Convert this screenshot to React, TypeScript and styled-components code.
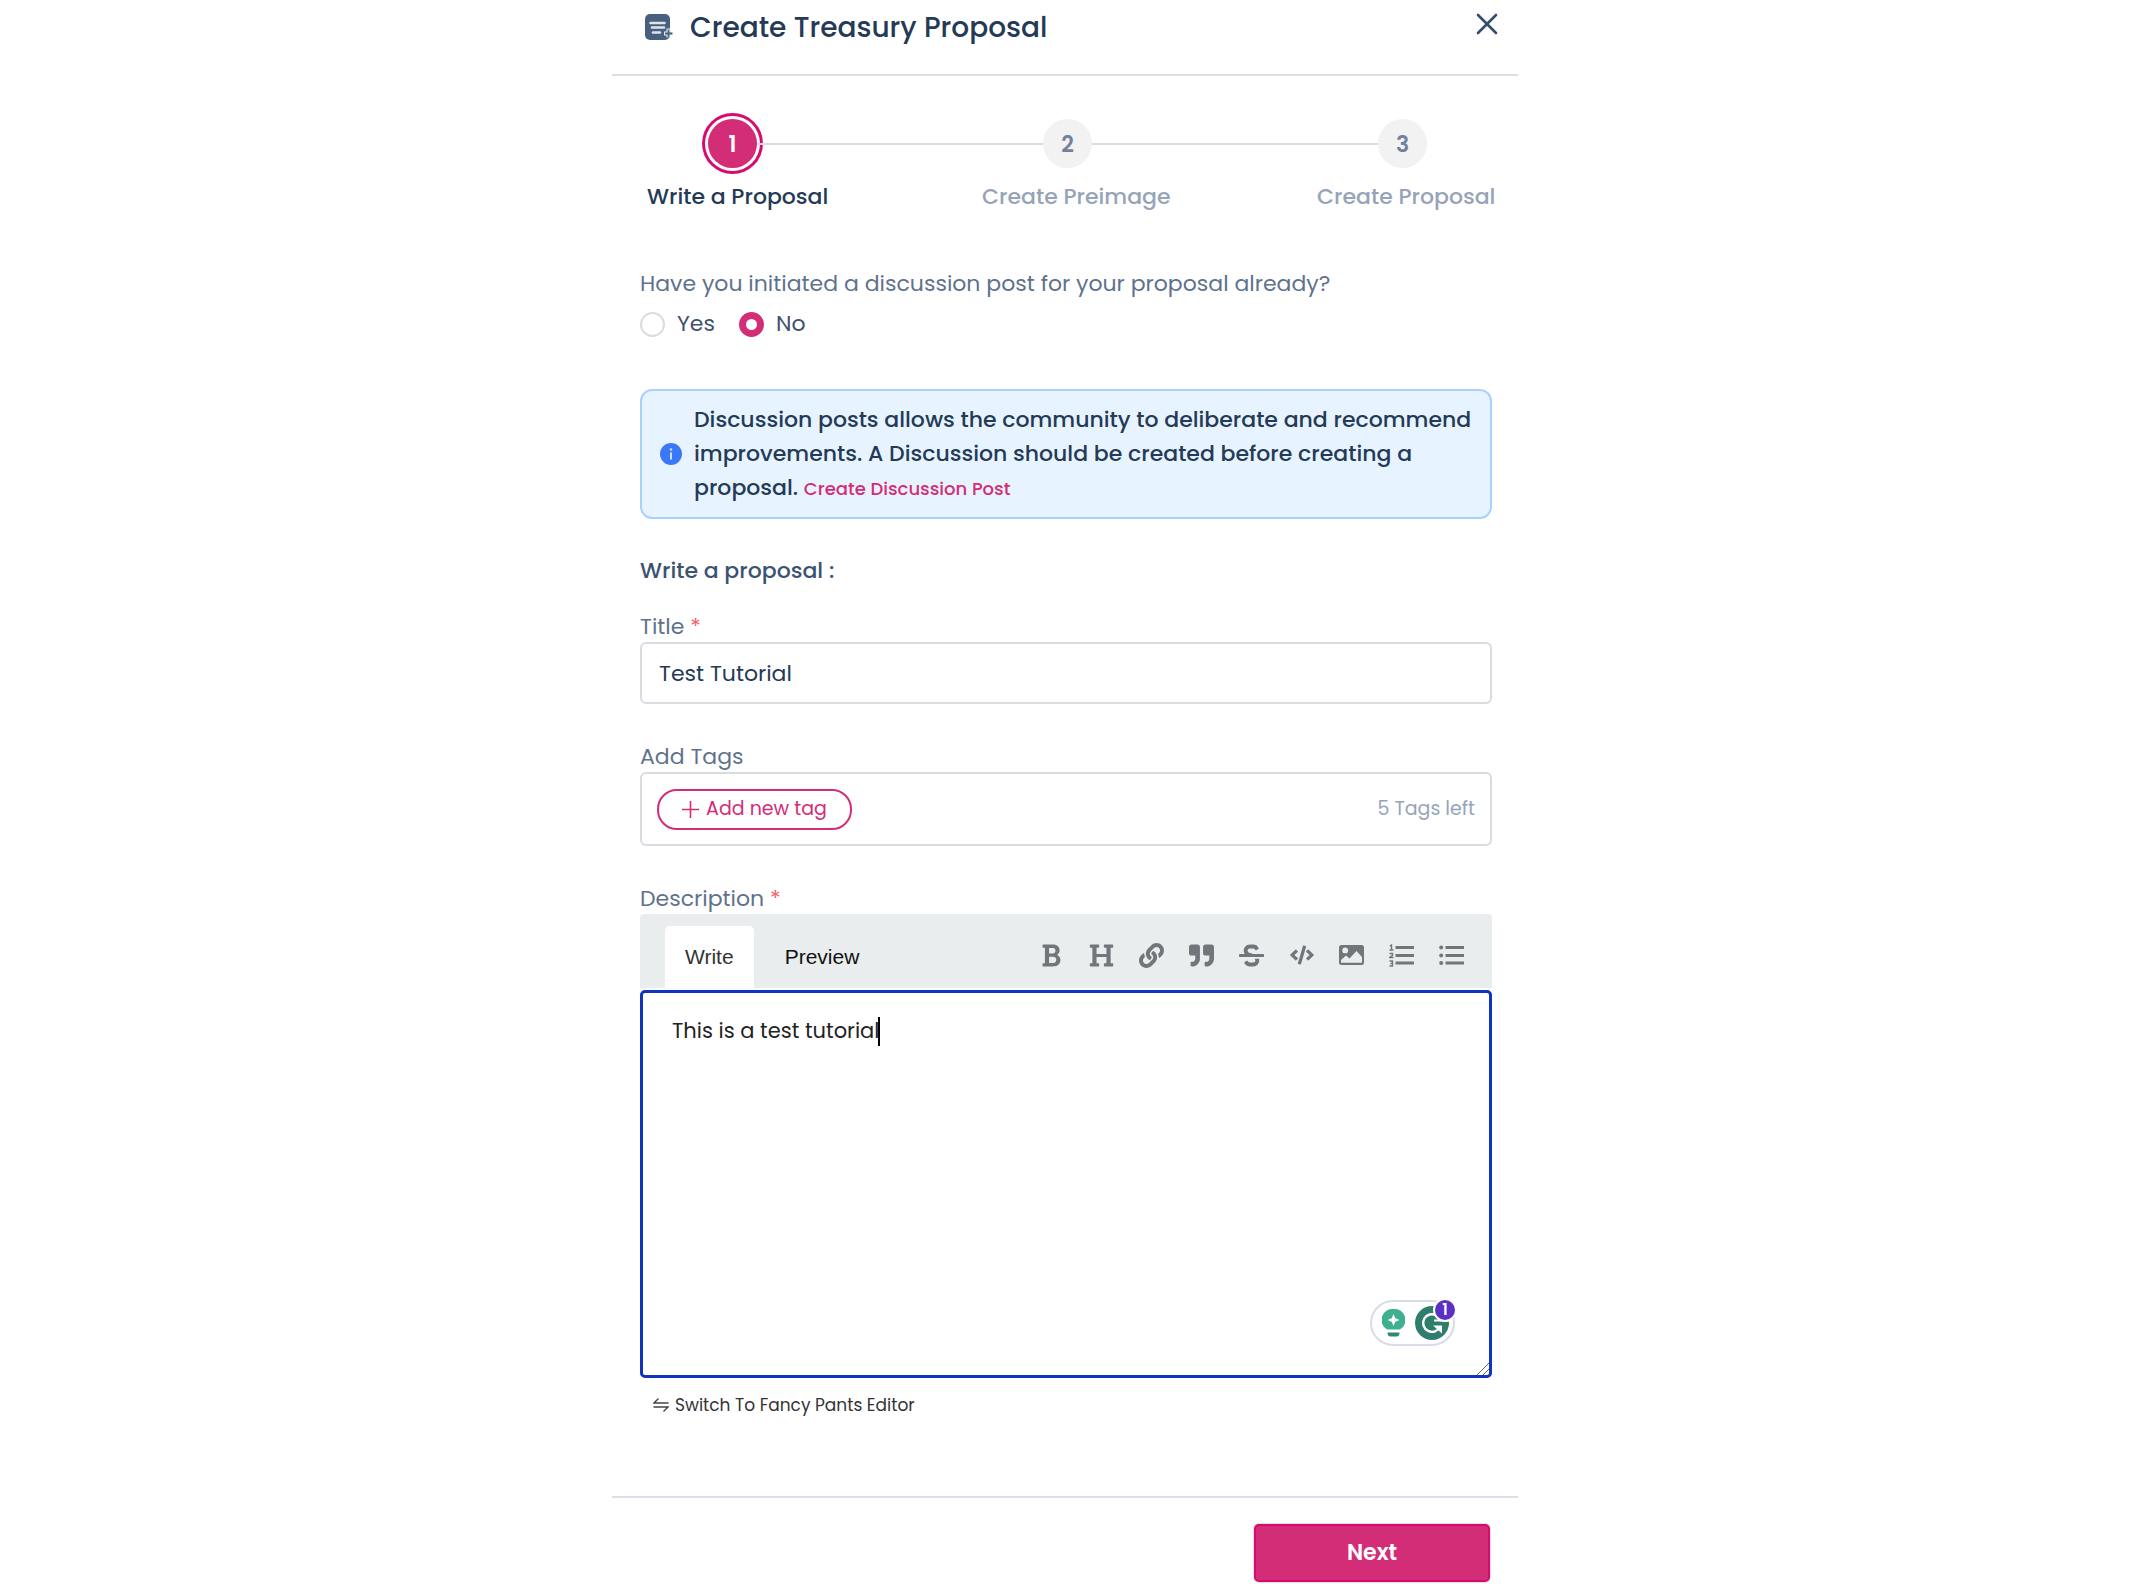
import React, { useState } from 'react';
import styled, { createGlobalStyle, css } from 'styled-components';
import { FaCode, FaLink, FaQuoteRight, FaStrikethrough } from 'react-icons/fa';

const color = {
  ink: '#243a57',
  heading: '#3b5273',
  label: '#5f728d',
  muted: '#96a4b8',
  line: '#dcdfe8',
  field: '#d9dbe1',
  pink: '#d42d78',
};

const GlobalStyle = createGlobalStyle`
  *, *::before, *::after { box-sizing: border-box; }
  body {
    margin: 0;
    background: #fff;
    color: ${color.ink};
    font-family: Poppins, Inter, 'Noto Sans', sans-serif;
    font-size: 22px;
    line-height: 34px;
  }
  button, input, textarea { font: inherit; color: inherit; }
  button { cursor: pointer; }
`;

const Dialog = styled.main`
  width: 100%;
  max-width: 906px;
  margin: 0 auto;
`;

const Header = styled.header`
  display: flex;
  align-items: center;
  gap: 17px;
  height: 76px;
  padding: 0 20px 20px 33px;
  border-bottom: 2px solid ${color.line};
`;

const Heading = styled.h1`
  flex: 1;
  margin: 0;
  padding-top: 2px;
  font-size: 28px;
  font-weight: 500;
  color: ${color.ink};
`;

const CloseButton = styled.button`
  display: flex;
  padding: 0;
  margin-bottom: 6px;
  border: 0;
  background: none;
`;

const Body = styled.form`
  display: flex;
  flex-direction: column;
  padding: 37px 26px 0 28px;
`;

const Steps = styled.ol`
  display: flex;
  list-style: none;
  margin: 0;
  padding: 0 0 0 7px;
`;

const Step = styled.li<{ $last?: boolean }>`
  display: flex;
  flex-direction: column;
  gap: 11px;
  min-width: 0;
  flex: ${(p) => (p.$last ? '0 0 175px' : '1')};
  white-space: nowrap;
`;

const Track = styled.div`
  display: flex;
  align-items: center;
  height: 61px;
`;

const Rail = styled.span<{ $lead?: boolean; $hidden?: boolean }>`
  flex: ${(p) => (p.$lead ? '0 0 61px' : '1')};
  height: 2px;
  background: ${(p) => (p.$hidden ? 'transparent' : '#d7dee3')};
`;

const StepNumber = styled.span<{ $active?: boolean }>`
  display: grid;
  place-items: center;
  width: 49px;
  height: 49px;
  padding-top: 3px;
  border-radius: 50%;
  font-weight: 600;
  background: #f2f2f2;
  color: #73829c;
  ${(p) =>
    p.$active &&
    css`
      background: ${color.pink};
      color: #fff;
      box-shadow: 0 0 0 3px #fff, 0 0 0 6px #d60b70;
    `}
`;

const StepLabel = styled.span<{ $active?: boolean }>`
  line-height: 24px;
  font-weight: 500;
  color: ${(p) => (p.$active ? color.ink : color.muted)};
`;

const Question = styled.fieldset`
  margin: 58px 0 0;
  padding: 0;
  border: 0;
`;

const Legend = styled.legend`
  padding: 0;
  color: ${color.label};
`;

const Choices = styled.div`
  display: flex;
  gap: 24px;
  margin-top: 6px;
`;

const Choice = styled.label`
  display: flex;
  align-items: center;
  gap: 12px;
  color: #42526c;
`;

const Radio = styled.input`
  appearance: none;
  width: 25px;
  height: 25px;
  margin: 0;
  border: 2px solid #dcdcdc;
  border-radius: 50%;
  background: #fff;
  &:checked {
    border: 7px solid ${color.pink};
  }
`;

const Notice = styled.div`
  display: flex;
  align-items: center;
  gap: 12px;
  margin-top: 48px;
  padding: 12px 8px 12px 18px;
  border: 2px solid #a9d1fb;
  border-radius: 12px;
  background: #e7f4ff;
  font-weight: 500;

  svg { flex: none; }
  p { margin: 0; }
`;

const NoticeLink = styled.a`
  font-size: 18px;
  line-height: 24px;
  color: ${color.pink};
  text-decoration: none;
`;

const SectionTitle = styled.h2`
  margin: 35px 0 0;
  font-size: 22px;
  font-weight: 500;
  color: ${color.heading};
`;

const Field = styled.div<{ $gap: number }>`
  display: flex;
  flex-direction: column;
  margin-top: ${(p) => p.$gap}px;
`;

const FieldLabel = styled.label`
  line-height: 30px;
  color: ${color.label};
`;

const Required = styled.span`
  color: #f2636b;
`;

const TextInput = styled.input`
  height: 62px;
  padding: 0 17px;
  border: 2px solid ${color.field};
  border-radius: 6px;
  background: #fff;
`;

const TagBox = styled.div`
  display: flex;
  align-items: center;
  justify-content: space-between;
  height: 74px;
  padding: 0 15px;
  border: 2px solid ${color.field};
  border-radius: 6px;
`;

const AddTag = styled.button`
  display: flex;
  align-items: center;
  justify-content: center;
  gap: 7px;
  width: 195px;
  height: 41px;
  padding: 0;
  border: 2px solid ${color.pink};
  border-radius: 20px;
  background: #fff;
  font-size: 19px;
  color: ${color.pink};
`;

const TagsLeft = styled.span`
  font-size: 19px;
  color: ${color.muted};
`;

const Toolbar = styled.div`
  display: flex;
  justify-content: space-between;
  height: 76px;
  padding: 12px 26px 0 25px;
  border-bottom: 2px solid #fbfcfc;
  border-radius: 4px 4px 0 0;
  background: #eaedee;
`;

const Group = styled.div`
  display: flex;
`;

const Tab = styled.button<{ $active?: boolean }>`
  padding: 0 20px;
  border: 0;
  border-radius: 5px 5px 0 0;
  background: ${(p) => (p.$active ? '#fff' : 'none')};
  font-family: 'Liberation Sans', Arial, sans-serif;
  font-size: 21px;
  color: ${(p) => (p.$active ? '#333' : '#111')};
  margin-right: 11px;
`;

const Tools = styled(Group)`
  align-items: center;
  gap: 21px;
  padding-bottom: 4px;
`;

const Tool = styled.button`
  display: grid;
  place-items: center;
  width: 29px;
  height: 36px;
  padding: 0;
  border: 0;
  background: none;
  color: #70767a;
`;

const Editor = styled.div`
  position: relative;
  display: flex;
`;

const EditorText = styled.textarea`
  flex: 1;
  height: 388px;
  padding: 21px 29px;
  border: 3px solid #1033c0;
  border-radius: 5px;
  outline: 0;
  resize: none;
  background: #fff;
  font-size: 21px;
  color: #222;
`;

const Caret = styled.span`
  position: absolute;
  top: 27px;
  left: 238px;
  width: 2px;
  height: 29px;
  background: #000;
`;

const Grip = styled.svg`
  position: absolute;
  right: 3px;
  bottom: 3px;
`;

const Assistant = styled.div`
  position: absolute;
  right: 37px;
  bottom: 32px;
  display: flex;
  align-items: center;
  justify-content: space-between;
  width: 85px;
  height: 46px;
  padding: 0 4px 0 10px;
  border: 2px solid #d9dce8;
  border-radius: 23px;
  background: #fff;
`;

const Badge = styled.span`
  position: absolute;
  top: -2px;
  right: -2px;
  display: grid;
  place-items: center;
  width: 20px;
  height: 20px;
  border-radius: 50%;
  background: #5b30c4;
  box-shadow: 0 0 0 2px #fff;
  font-size: 15px;
  font-weight: 600;
  line-height: 20px;
  color: #fff;
`;

const SwitchEditor = styled.button`
  display: flex;
  align-items: center;
  align-self: flex-start;
  gap: 6px;
  margin: 10px 0 74px 13px;
  padding: 0;
  border: 0;
  background: none;
  font-size: 17px;
  color: #333;
`;

const Footer = styled.footer`
  display: flex;
  justify-content: flex-end;
  padding: 26px 28px 15px;
  border-top: 2px solid ${color.line};
`;

const NextButton = styled.button`
  width: 236px;
  height: 58px;
  border: 2px solid #d60b70;
  border-radius: 5px;
  background: ${color.pink};
  box-shadow: 0 0 2px #8d8d8d;
  font-weight: 600;
  color: #fff;
`;

const ProposalIcon = () => (
  <svg width="28" height="27" viewBox="0 0 28 27" aria-hidden="true">
    <rect width="25" height="26" rx="5" fill="#485f7d" />
    <path d="M5.500 9h14M7 13.500h12M8 18.500h7" stroke="#dfe4ec" strokeWidth="2.600" strokeLinecap="round" />
    <path d="M23.500 14.500v9M19 19.500h8" stroke="#e9edf2" strokeWidth="4" />
    <path d="M23.500 15.500v8M20 19.500h7.500" stroke="#485f7d" strokeWidth="1.800" />
  </svg>
);

const CloseIcon = () => (
  <svg width="22" height="22" viewBox="0 0 22 22" aria-hidden="true">
    <path d="M2 2l18 18M20 2L2 20" stroke="#334d6e" strokeWidth="2.600" strokeLinecap="round" />
  </svg>
);

const InfoIcon = () => (
  <svg width="22" height="22" viewBox="0 0 22 22" aria-hidden="true">
    <circle cx="11" cy="11" r="11" fill="#3b78f8" />
    <path d="M11 9.500v7" stroke="#cfe0ff" strokeWidth="2" />
    <circle cx="11" cy="6.500" r="1.300" fill="#cfe0ff" />
  </svg>
);

const PlusIcon = () => (
  <svg width="17" height="17" viewBox="0 0 17 17" aria-hidden="true">
    <path d="M8.500 0v17M0 8.500h17" stroke="#d42d78" strokeWidth="1.600" />
  </svg>
);

const BoldIcon = () => (
  <svg width="19" height="25" viewBox="0 0 384 512" fill="currentColor" aria-hidden="true">
    <path d="M304.793 243.891c33.639-18.537 53.657-54.16 53.657-95.693 0-48.236-26.25-87.626-68.626-104.179C265.138 34.01 240.849 32 209.661 32H24c-8.837 0-16 7.163-16 16v33.049c0 8.837 7.163 16 16 16h33.113v318.53H24c-8.837 0-16 7.163-16 16V464c0 8.837 7.163 16 16 16h195.69c24.203 0 44.834-1.289 66.866-7.584C337.52 457.193 376 410.647 376 350.014c0-52.168-26.573-91.684-71.207-106.123zM142.217 100.809h67.444c16.294 0 27.536 2.019 37.525 6.717 15.828 8.479 24.906 26.502 24.906 49.446 0 35.029-20.32 56.79-53.029 56.79h-76.846V100.809zm112.642 305.475c-10.14 4.056-22.677 4.907-31.409 4.907h-81.233V281.943h84.367c39.645 0 63.057 25.38 63.057 63.057.001 28.425-13.66 52.483-34.782 61.284z" />
  </svg>
);

const HeadingIcon = () => (
  <svg width="25" height="25" viewBox="0 0 512 512" fill="currentColor" aria-hidden="true">
    <path d="M496 80V48c0-8.837-7.163-16-16-16H320c-8.837 0-16 7.163-16 16v32c0 8.837 7.163 16 16 16h37.621v128H154.379V96H192c8.837 0 16-7.163 16-16V48c0-8.837-7.163-16-16-16H32c-8.837 0-16 7.163-16 16v32c0 8.837 7.163 16 16 16h37.275v320H32c-8.837 0-16 7.163-16 16v32c0 8.837 7.163 16 16 16h160c8.837 0 16-7.163 16-16v-32c0-8.837-7.163-16-16-16h-37.621V288H357.62v128H320c-8.837 0-16 7.163-16 16v32c0 8.837 7.163 16 16 16h160c8.837 0 16-7.163 16-16v-32c0-8.837-7.163-16-16-16h-37.275V96H480c8.837 0 16-7.163 16-16z" />
  </svg>
);

const ImageIcon = () => (
  <svg width="25" height="20" viewBox="0 0 25 20" aria-hidden="true">
    <path
      fillRule="evenodd"
      fill="currentColor"
      d="M2.500 0h20A2.500 2.500 0 0 1 25 2.500v15a2.500 2.500 0 0 1-2.500 2.500h-20A2.500 2.500 0 0 1 0 17.500v-15A2.500 2.500 0 0 1 2.500 0zM6.200 2.500a2.900 2.900 0 1 0 0 5.800 2.900 2.900 0 0 0 0-5.800zM2 17.800h21V12l-5.500-6-7 7.500-3.500-3L2 15z"
    />
  </svg>
);

const OrderedListIcon = () => (
  <svg width="25" height="23" viewBox="0 0 25 23" aria-hidden="true" stroke="currentColor" fill="none">
    <path d="M6.500 3.500H25M6.500 11.500H25M6.500 19H25" strokeWidth="2.800" />
    <path d="M.8 2L2.500 1v5M.5 6h4M.5 9.500h3v2l-3 2h4M.5 17h3v5h-3M1.500 19.500h2" strokeWidth="1.400" />
  </svg>
);

const BulletListIcon = () => (
  <svg width="25" height="23" viewBox="0 0 25 23" aria-hidden="true" fill="currentColor">
    <path d="M6.500 2.100H25v2.800H6.500zM6.500 10.100H25v2.800H6.500zM6.500 17.600H25v2.800H6.500z" />
    <circle cx="2.200" cy="3.500" r="2" />
    <circle cx="2.200" cy="11.500" r="2" />
    <circle cx="2.200" cy="19" r="2" />
  </svg>
);

const BulbIcon = () => (
  <svg width="23" height="28" viewBox="0 0 23 28" aria-hidden="true">
    <path d="M11.500 0a11 11 0 0 1 6.500 20.500H5A11 11 0 0 1 11.500 0z" fill="#3eb08f" />
    <path d="M11.500 5l1.800 4.200 4.200 1.800-4.200 1.800-1.800 4.200-1.800-4.200L5.500 11l4.200-1.800z" fill="#fff" />
    <path d="M5.500 23.500h12c0 2.500-1 4-3 4h-6c-2 0-3-1.500-3-4z" fill="#2b8a72" />
  </svg>
);

const GrammarIcon = () => (
  <svg width="34" height="34" viewBox="0 0 34 34" aria-hidden="true">
    <circle cx="17" cy="17" r="17" fill="#2f7d6d" />
    <path d="M21.500 9.500A8.800 8.800 0 1 0 25 20.500" fill="none" stroke="#fff" strokeWidth="2.400" />
    <path d="M18 19.500h9v8z" fill="#fff" />
    <path d="M19 14.500h15" stroke="#fff" strokeWidth="2" />
  </svg>
);

const SwapIcon = () => (
  <svg width="16" height="14" viewBox="0 0 16 14" aria-hidden="true" fill="none" stroke="#444" strokeWidth="1.400">
    <path d="M15.500 5H1l4.500-4.500M.5 9H15l-4.500 4.500" />
  </svg>
);

const GripIcon = () => (
  <Grip width="12" height="12" viewBox="0 0 12 12" aria-hidden="true" stroke="#666" strokeWidth="1">
    <path d="M0 12L12 0M6 12l6-6" />
  </Grip>
);

const steps = ['Write a Proposal', 'Create Preimage', 'Create Proposal'];

const tools = [
  { name: 'Bold', icon: <BoldIcon /> },
  { name: 'Heading', icon: <HeadingIcon /> },
  { name: 'Link', icon: <FaLink size={25} /> },
  { name: 'Quote', icon: <FaQuoteRight size={25} /> },
  { name: 'Strikethrough', icon: <FaStrikethrough size={25} /> },
  { name: 'Code', icon: <FaCode size={24} /> },
  { name: 'Image', icon: <ImageIcon /> },
  { name: 'Ordered list', icon: <OrderedListIcon /> },
  { name: 'Bullet list', icon: <BulletListIcon /> },
];

export default function App() {
  const [posted, setPosted] = useState('no');
  const [title, setTitle] = useState('Test Tutorial');
  const [description, setDescription] = useState('This is a test tutorial');

  return (
    <>
      <GlobalStyle />
      <Dialog>
        <Header>
          <ProposalIcon />
          <Heading>Create Treasury Proposal</Heading>
          <CloseButton type="button" aria-label="Close">
            <CloseIcon />
          </CloseButton>
        </Header>

        <Body id="proposal">
          <Steps>
            {steps.map((label, i) => {
              const last = i === steps.length - 1;
              return (
                <Step key={label} $last={last}>
                  <Track>
                    <Rail $lead $hidden={i === 0} />
                    <StepNumber $active={i === 0}>{i + 1}</StepNumber>
                    {!last && <Rail />}
                  </Track>
                  <StepLabel $active={i === 0}>{label}</StepLabel>
                </Step>
              );
            })}
          </Steps>

          <Question>
            <Legend>Have you initiated a discussion post for your proposal already?</Legend>
            <Choices>
              <Choice>
                <Radio type="radio" name="posted" checked={posted === 'yes'} onChange={() => setPosted('yes')} />
                Yes
              </Choice>
              <Choice>
                <Radio type="radio" name="posted" checked={posted === 'no'} onChange={() => setPosted('no')} />
                No
              </Choice>
            </Choices>
          </Question>

          <Notice>
            <InfoIcon />
            <p>
              Discussion posts allows the community to deliberate and recommend improvements. A Discussion should be
              created before creating a proposal. <NoticeLink href="#discussion">Create Discussion Post</NoticeLink>
            </p>
          </Notice>

          <SectionTitle>Write a proposal :</SectionTitle>

          <Field $gap={24}>
            <FieldLabel htmlFor="title">
              Title <Required>*</Required>
            </FieldLabel>
            <TextInput id="title" value={title} onChange={(e) => setTitle(e.target.value)} />
          </Field>

          <Field $gap={38}>
            <FieldLabel htmlFor="tags">Add Tags</FieldLabel>
            <TagBox>
              <AddTag id="tags" type="button">
                <PlusIcon />
                Add new tag
              </AddTag>
              <TagsLeft>5 Tags left</TagsLeft>
            </TagBox>
          </Field>

          <Field $gap={38}>
            <FieldLabel htmlFor="description">
              Description <Required>*</Required>
            </FieldLabel>
            <Toolbar>
              <Group>
                <Tab type="button" $active>
                  Write
                </Tab>
                <Tab type="button">Preview</Tab>
              </Group>
              <Tools>
                {tools.map((t) => (
                  <Tool key={t.name} type="button" aria-label={t.name}>
                    {t.icon}
                  </Tool>
                ))}
              </Tools>
            </Toolbar>
            <Editor>
              <EditorText id="description" value={description} onChange={(e) => setDescription(e.target.value)} />
              <Caret />
              <Assistant>
                <BulbIcon />
                <GrammarIcon />
                <Badge>1</Badge>
              </Assistant>
              <GripIcon />
            </Editor>
          </Field>

          <SwitchEditor type="button">
            <SwapIcon />
            Switch To Fancy Pants Editor
          </SwitchEditor>
        </Body>

        <Footer>
          <NextButton type="submit" form="proposal">
            Next
          </NextButton>
        </Footer>
      </Dialog>
    </>
  );
}
